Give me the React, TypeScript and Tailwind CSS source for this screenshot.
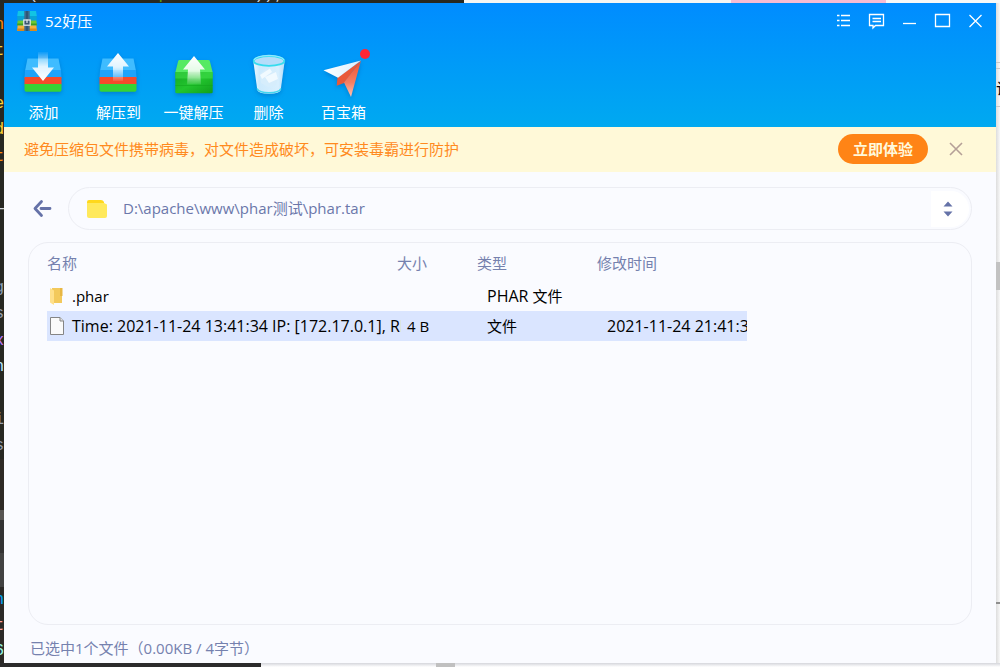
import type { ReactNode } from "react";

const cjk = "font-['Open_Sans','Noto_Sans_CJK_SC',sans-serif]";

function Arrow({ up }: { up?: boolean }) {
  return up ? (
    <path d="M24 3 L35 16.5 H29 V31 H19 V16.5 H13 Z" fill="url(#arrowUp)" />
  ) : (
    <path d="M19 2 H29 V17.5 H35 L24 31 L13 17.5 H19 Z" fill="url(#arrowDown)" />
  );
}

function ArchiveIcon({ up }: { up?: boolean }) {
  return (
    <svg width="48" height="48" viewBox="1 0 48 48" aria-hidden="true" className="drop-shadow-[0_2px_2px_rgba(0,70,150,0.35)]">
      <path d="M8.5 8.5 H39.5 L42 21 H6 Z" fill="#3fbcff" />
      <path d="M6 20 H42 L42.5 28 H5.5 Z" fill="#1ea3fb" />
      <path d="M5.5 27 H42.5 V34.5 H5.5 Z" fill="#f54b2b" />
      <path d="M5.5 34 H42.5 V40 Q42.5 41.8 40.7 41.8 H7.3 Q5.5 41.8 5.5 40 Z" fill="#36d335" />
      <Arrow up={up} />
    </svg>
  );
}

function ExtractIcon() {
  return (
    <svg width="48" height="48" viewBox="0 0 48 48" aria-hidden="true" className="drop-shadow-[0_2px_2px_rgba(0,70,150,0.35)]">
      <path d="M9.5 10 H38.5 Q39.5 10 39.8 11 L42.7 22.5 H5.3 L8.2 11 Q8.5 10 9.5 10 Z" fill="#55ea62" />
      <path d="M5.3 22 H42.7 V42 Q42.7 43.3 41.4 43.3 H6.6 Q5.3 43.3 5.3 42 Z" fill="url(#greenBody)" />
      <path d="M5.3 22 H42.7 V28.5 H5.3 Z" fill="#3fdc4a" opacity=".6" />
      <path d="M5.3 35.5 H42.7" stroke="#12a51d" strokeWidth="1" opacity=".5" />
      <path d="M24 6 L35 19.5 H30 L31 34.5 H17 L18 19.5 H13 Z" fill="url(#arrowUp)" />
    </svg>
  );
}

function BinIcon() {
  return (
    <svg width="48" height="48" viewBox="0 0 48 48" aria-hidden="true" className="drop-shadow-[0_2px_2px_rgba(0,70,150,0.3)]">
      <path d="M8.3 11 L12.3 40 Q13 43.5 24 43.8 Q35 43.5 35.7 40 L39.7 11 Z" fill="url(#glass)" />
      <path d="M12 38.5 Q14 42.7 24 42.8 Q34 42.7 36 38.5" fill="none" stroke="#42d6ee" strokeWidth="1.6" />
      <path d="M15 24 L21 19 L26 22 L30 19 L33 28 L31 35 L23 37 L16 33 Z" fill="#d6edfc" />
      <path d="M15 25 L25 18.5 L27 22 L17 29 Z M20 27 L31 22 L33 29 L24 33 Z" fill="#f7fcff" opacity=".8" />
      <ellipse cx="24" cy="11" rx="15.3" ry="4.8" fill="#b5ddfa" stroke="#35dcef" strokeWidth="1.8" />
      <path d="M9 10 Q11 5.7 24 5.4 Q37 5.7 39 10" fill="none" stroke="#91eaff" strokeWidth="1.2" />
    </svg>
  );
}

function PlaneIcon() {
  return (
    <svg width="48" height="48" viewBox="0 0 48 48" aria-hidden="true" className="drop-shadow-[0_2px_2px_rgba(0,70,150,0.35)]">
      <path d="M17.5 27.5 L40.5 11 L24 33 L16.7 35.8 Z" fill="#e9593a" />
      <path d="M41 10.5 L31 47 L24 32.5 Z" fill="url(#redWing)" />
      <path d="M3.5 20.3 L41 10.5 L18 27.8 Z" fill="url(#whiteWing)" />
    </svg>
  );
}

function Gradients() {
  return (
    <svg width="0" height="0" className="absolute" aria-hidden="true">
      <defs>
        <linearGradient id="arrowUp" x1="0" y1="0" x2="0" y2="1">
          <stop offset="0" stopColor="#fff" />
          <stop offset=".5" stopColor="#fff" stopOpacity=".85" />
          <stop offset="1" stopColor="#fff" stopOpacity=".1" />
        </linearGradient>
        <linearGradient id="arrowDown" x1="0" y1="0" x2="0" y2="1">
          <stop offset="0" stopColor="#fff" stopOpacity=".05" />
          <stop offset=".5" stopColor="#fff" stopOpacity=".85" />
          <stop offset="1" stopColor="#fff" />
        </linearGradient>
        <linearGradient id="greenBody" x1="0" y1="0" x2="1" y2="1">
          <stop offset="0" stopColor="#14a722" />
          <stop offset=".5" stopColor="#22c52e" />
          <stop offset="1" stopColor="#12a01c" />
        </linearGradient>
        <linearGradient id="glass" x1="0" y1="0" x2="1" y2="0">
          <stop offset="0" stopColor="#e9f8ff" />
          <stop offset=".2" stopColor="#cdeafd" />
          <stop offset=".8" stopColor="#d8effe" />
          <stop offset="1" stopColor="#b4defa" />
        </linearGradient>
        <linearGradient id="redWing" x1="0" y1="0" x2="0" y2="1">
          <stop offset="0" stopColor="#f0502f" />
          <stop offset=".6" stopColor="#f57e62" />
          <stop offset="1" stopColor="#ffc4b5" />
        </linearGradient>
        <linearGradient id="whiteWing" x1="0" y1="0" x2="1" y2="0">
          <stop offset="0" stopColor="#fff" />
          <stop offset="1" stopColor="#d9eefe" />
        </linearGradient>
      </defs>
    </svg>
  );
}

function Logo() {
  return (
    <svg width="20" height="20" viewBox="0 0 20 20" aria-hidden="true">
      <path d="M1 0 H19 L19.8 5 H.2 Z" fill="#12c4e4" />
      <path d="M.2 5 H19.8 V9.5 H.2 Z" fill="#0aa3d6" />
      <path d="M.6 9.5 H19.4 L19.8 14.5 H.2 Z" fill="#6cc832" />
      <path d="M.2 12.5 H19.8 V14.5 H.2 Z" fill="#3c9f22" />
      <path d="M.6 14.5 H19.4 L19.8 20 H.2 Z" fill="#f5b23c" />
      <path d="M.2 17.5 H19.8 V20 H.2 Z" fill="#d98a1c" />
      <path d="M7.3 0 H12.7 V20 H7.3 Z" fill="#3f6a8c" />
      <path d="M9.3 0 H10.7 V20 H9.3 Z" fill="#2d4f6e" />
      <rect x="6.8" y="9" width="6.4" height="5.2" fill="#3a5670" stroke="#e6edf2" strokeWidth="1.2" />
      <path d="M10 8.5 V12" stroke="#e6edf2" strokeWidth="1.2" />
    </svg>
  );
}

const tools: { label: string; icon: ReactNode; badge?: boolean }[] = [
  { label: "添加", icon: <ArchiveIcon /> },
  { label: "解压到", icon: <ArchiveIcon up /> },
  { label: "一键解压", icon: <ExtractIcon /> },
  { label: "删除", icon: <BinIcon /> },
  { label: "百宝箱", icon: <PlaneIcon />, badge: true },
];

const windowControls: { label: string; drawing: ReactNode }[] = [
  {
    label: "菜单",
    drawing: <path d="M2 2.5 H4.5 M6 2.5 H15 M2 7.5 H4.5 M6 7.5 H15 M2 12.5 H4.5 M6 12.5 H15" />,
  },
  {
    label: "反馈",
    drawing: <path d="M1.5 1.5 H15.5 V12.5 H7.5 L5 15 V12.5 H1.5 Z M4.5 5.5 H13 M4.5 8.5 H13" />,
  },
  { label: "最小化", drawing: <path d="M2 10.5 H15" /> },
  { label: "最大化", drawing: <path d="M1.5 1.5 H15.5 V13.5 H1.5 Z" /> },
  { label: "关闭", drawing: <path d="M2.5 2 L14.5 14 M14.5 2 L2.5 14" /> },
];

const codeLines: [string, string][] = [
  ["n", "text-orange-400"],
  ["t", "text-amber-300"],
  ["", ""],
  ["e", "text-amber-300"],
  ["d", "text-amber-300"],
  ["t", "text-orange-400"],
  ["", ""],
  ["—", "text-gray-300"],
  ["", ""],
  ["", ""],
  ["g", "text-slate-400"],
  ["s", "text-gray-400"],
  ["x", "text-purple-400"],
  ["n", "text-sky-200"],
  ["", ""],
  ["i", "text-gray-400"],
  ["s", "text-gray-400"],
];

function EditorEdge() {
  return (
    <div aria-hidden="true" className="flex w-1 shrink-0 flex-col overflow-hidden bg-[#272822] font-['Liberation_Mono',monospace] text-[16px]">
      <div className="flex h-[456px] flex-col justify-between pt-[9px]">
        {codeLines.map(([text, tone], i) => (
          <div key={i} className={`flex h-[26px] items-center justify-end ${tone}`}>{text}</div>
        ))}
      </div>
      <div className="h-[51px] bg-[#2e2a25]" />
      <div className="h-[10px] bg-[#575552]" />
      <div className="h-[33px] bg-[#333333]" />
      <div className="h-[34px] bg-[#424242]" />
      <div className="flex-1 bg-[#2b2927]">
        <div className="flex h-[26px] items-center justify-end text-sky-500">n</div>
        <div className="flex h-[26px] items-center justify-end text-red-300">t</div>
        <div className="flex h-[24px] items-center justify-end text-teal-200">6</div>
      </div>
    </div>
  );
}

function PageEdge() {
  return (
    <div aria-hidden="true" className="flex w-1 shrink-0 flex-col overflow-hidden bg-gradient-to-r from-[#dddddd] to-[#f8f8f8]">
      <div className="h-[60px] border-b border-[#c8c8c8]" />
      <div className="h-[6px] border-b border-[#c8c8c8]" />
      <div className={`flex h-[38px] items-center border-b border-[#c8c8c8] text-[15px] text-black ${cjk}`}>计</div>
      <div className="h-[155px]" />
      <div className="h-[28px] bg-[#c2c2c2]" />
      <div className="h-[314px] border-b-2 border-[#8f8f8f]" />
    </div>
  );
}

export default function App() {
  return (
    <div className={`flex min-h-screen flex-col bg-[#f8f8f8] text-[15px] leading-5 ${cjk}`}>
      <Gradients />
      <div aria-hidden="true" className="flex h-[3px] shrink-0 overflow-hidden">
        <div className="flex w-[464px] items-end whitespace-pre bg-[#272822] font-['Liberation_Mono',monospace] text-[16px] leading-4">
          <span className="text-gray-300">sts( </span>
          <span className="text-[12px] text-gray-500">filename: </span>
          <span className="text-lime-600"> './phar.tar' </span>
          <span className="text-gray-300">));</span>
        </div>
        <div className="w-[267px] bg-[#f5f5f3]" />
        <div className="w-[155px] bg-[#f6bcd3]" />
      </div>

      <div className="flex flex-1">
        <EditorEdge />
        <div className="flex min-w-0 flex-1 flex-col bg-[#fafbff]">
          <header className="bg-gradient-to-b from-[#008cff] to-[#01a9f0] text-white">
            <div className="flex h-9 items-center justify-between pl-[13px] pr-1">
              <h1 className="flex items-center gap-2">
                <Logo />
                52好压
              </h1>
              <div className="flex">
                {windowControls.map((control) => (
                  <button key={control.label} type="button" aria-label={control.label} className="flex h-9 w-[33px] items-center justify-center">
                    <svg width="17" height="17" viewBox="0 0 17 17" fill="none" stroke="currentColor" strokeWidth="1.3" aria-hidden="true">
                      {control.drawing}
                    </svg>
                  </button>
                ))}
              </div>
            </div>
            <nav className="flex h-[88px] pl-[2px]">
              {tools.map((tool) => (
                <button key={tool.label} type="button" className="relative flex w-[75px] flex-col items-center gap-1 whitespace-nowrap pt-[11px]">
                  {tool.icon}
                  {tool.badge && <span className="absolute right-[11px] top-[10px] size-[10px] rounded-full bg-[#ff2635]" />}
                  <span>{tool.label}</span>
                </button>
              ))}
            </nav>
          </header>

          <div className="flex h-[45px] items-center bg-[#fff9d8] pb-[2px] pl-5 pr-8">
            <p className="flex-1 text-[#ff8a1e]">避免压缩包文件携带病毒，对文件造成破坏，可安装毒霸进行防护</p>
            <button type="button" className="h-[30px] w-[90px] rounded-full bg-[#ff8416] font-bold text-[#fff9dc]">立即体验</button>
            <button type="button" aria-label="关闭提示" className="ml-5 flex size-4 items-center justify-center text-[#b5a097]">
              <svg width="16" height="16" viewBox="0 0 16 16" stroke="currentColor" strokeWidth="1.6" aria-hidden="true">
                <path d="M2 2 L14 14 M14 2 L2 14" />
              </svg>
            </button>
          </div>

          <main className="flex flex-1 flex-col px-6 pt-[15px]">
            <div className="flex items-center">
              <button type="button" aria-label="返回" className="flex w-10 justify-start pl-1 text-[#6572a8]">
                <svg width="20" height="20" viewBox="0 0 20 20" fill="none" stroke="currentColor" strokeWidth="2.8" strokeLinecap="round" strokeLinejoin="round" aria-hidden="true">
                  <path d="M9.5 2.5 L3 9.5 L9.5 16.5 M9 9.5 H18" />
                </svg>
              </button>
              <div className="flex h-[43px] flex-1 items-center rounded-full border border-[#ecedf3] pl-[18px] pr-[2px]">
                <svg width="20" height="18" viewBox="0 0 20 18" aria-hidden="true">
                  <path d="M0 2 Q0 0 2 0 H14 Q16 0 17 2 L17 9 H0 Z" fill="#ffd81c" />
                  <path d="M0 3 H17 L20 4.5 V16 Q20 18 18 18 H2 Q0 18 0 16 Z" fill="#ffe95c" />
                </svg>
                <input
                  type="text"
                  aria-label="路径"
                  defaultValue="D:\apache\www\phar测试\phar.tar"
                  className="ml-4 min-w-0 flex-1 bg-transparent pb-[2px] text-[#6b77aa] outline-none"
                />
                <button type="button" aria-label="展开路径" className="flex h-9 w-[38px] items-center justify-center rounded-r-full bg-white pr-1 text-[#6572a8]">
                  <svg width="10" height="16" viewBox="0 0 10 16" fill="currentColor" aria-hidden="true">
                    <path d="M5 .5 L9.5 5.5 H.5 Z M5 15.5 L9.5 10.5 H.5 Z" />
                  </svg>
                </button>
              </div>
            </div>

            <section className="mt-3 flex-1 rounded-[20px] border border-[#ecedf3] pl-[18px] pt-[2px]">
              <table className="w-[700px] table-fixed border-collapse text-left text-black">
                <colgroup>
                  <col className="w-[350px]" />
                  <col className="w-[80px]" />
                  <col className="w-[120px]" />
                  <col className="w-[150px]" />
                </colgroup>
                <thead>
                  <tr className="h-9 text-[#7581ae]">
                    <th scope="col" className="p-0 font-normal">名称</th>
                    <th scope="col" className="p-0 font-normal">大小</th>
                    <th scope="col" className="p-0 font-normal">类型</th>
                    <th scope="col" className="p-0 font-normal">修改时间</th>
                  </tr>
                </thead>
                <tbody>
                  <tr className="h-[30px]">
                    <td className="p-0">
                      <div className="flex items-center gap-2 pl-[3px]">
                        <svg width="14" height="18" viewBox="0 0 14 18" aria-hidden="true">
                          <path d="M2 1 H12 V16 H2 Z" fill="#f3c95b" />
                          <path d="M10 1 H12.5 V9 H10 Z" fill="#e8b743" />
                          <path d="M0 1 L4 3.5 V18 L0 15.5 Z" fill="#ffe08a" />
                        </svg>
                        .phar
                      </div>
                    </td>
                    <td className="p-0 pl-[10px]" />
                    <td className="p-0 pl-[10px]"><span className="text-[16px]">PHAR </span>文件</td>
                    <td className="p-0 pl-[10px]" />
                  </tr>
                  <tr className="h-[30px] bg-[#dae5ff]">
                    <td className="p-0">
                      <div className="-mr-1 flex items-center gap-2 overflow-hidden whitespace-nowrap pl-[3px] text-[16px]">
                        <svg width="14" height="18" viewBox="0 0 14 18" className="shrink-0" aria-hidden="true">
                          <path d="M.5 .5 H10 L13.5 4 V17.5 H.5 Z" fill="#fafafa" stroke="#858585" />
                          <path d="M10 .5 V4 H13.5" fill="#e3e3e3" stroke="#858585" />
                        </svg>
                        Time: 2021-11-24 13:41:34 IP: [172.17.0.1], RE
                      </div>
                    </td>
                    <td className="p-0 pl-[10px]">4 B</td>
                    <td className="p-0 pl-[10px]">文件</td>
                    <td className="overflow-hidden whitespace-nowrap p-0 pl-[10px] text-[16px]">2021-11-24 21:41:3</td>
                  </tr>
                </tbody>
              </table>
            </section>

            <footer className="flex h-[38px] items-center pl-[2px] pt-[7px] text-[#7581ae]">
              <p>已选中1个文件（0.00KB / 4字节）</p>
            </footer>
          </main>
        </div>
        <PageEdge />
      </div>

      <div aria-hidden="true" className="flex h-1 shrink-0 bg-gradient-to-b from-[#d5d6dc] to-white">
        <div className="w-[261px] bg-[#2b2b2b]" />
        <div className="w-[175px]" />
        <div className="w-[19px] bg-[#c0c0c0]" />
      </div>
    </div>
  );
}
